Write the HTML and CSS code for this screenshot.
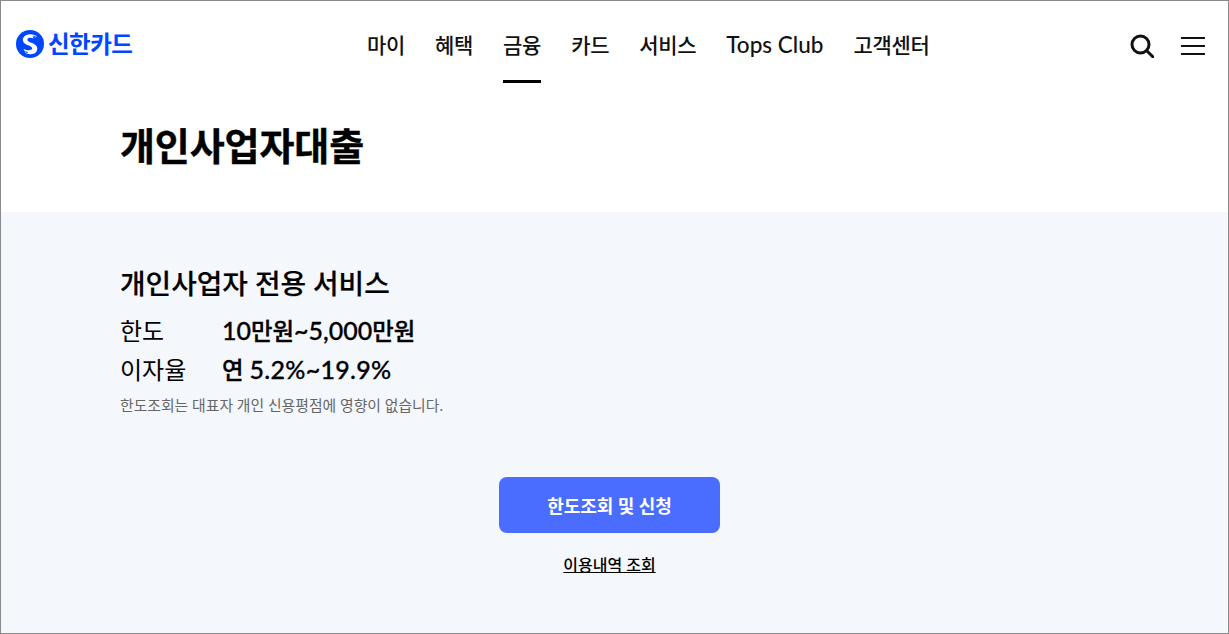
FILE: index.html
```html
<!DOCTYPE html>
<html lang="ko">
<head>
<meta charset="utf-8">
<title>개인사업자대출</title>
<link rel="stylesheet" href="styles.css">
</head>
<body>
<div class="frame">
  <header class="top">
    <a class="logo">
      <svg width="28" height="28" viewBox="0 0 28 28"><circle cx="14" cy="14" r="14" fill="#0046ff"/><path d="M21 6.500C17 3.500 10 3.500 7.500 7.500 5.500 11 8 13.500 11.500 15c2.500 1 5 1.800 4.500 3.800-.5 1.800-4 2-8.500.2l2.500 4.500c4 1.500 9.500 1.200 11-3 1.300-3.800-1.500-6-5-7.500-2.500-1-5-2-4.500-3.800.5-1.500 3.500-1.800 6-.7l-1-2.500 2.500 1.500z" fill="#fff"/><path d="M17 5.500l1.500 1.800 1.500-1zM9 21l2 2.500 1-1.500z" fill="#0046ff"/></svg>
      <span class="logo-text">신한카드</span>
    </a>
    <nav class="nav">
      <a>마이</a><a>혜택</a><a class="on">금융</a><a>카드</a><a>서비스</a><a class="latin">Tops Club</a><a>고객센터</a>
    </nav>
    <div class="tools">
      <svg width="24" height="24" viewBox="0 0 24 24" fill="none" stroke="#111" stroke-width="3"><circle cx="10.500" cy="10.500" r="8.500"/><path d="M16.800 16.800l6 6" stroke-linecap="round"/></svg>
      <svg width="24" height="20" viewBox="0 0 24 20" stroke="#111" stroke-width="2"><path d="M0 2h24M0 10h24M0 18h24"/></svg>
    </div>
  </header>
  <div class="title-wrap"><h1>개인사업자대출</h1></div>
  <main class="panel">
    <h2>개인사업자 전용 서비스</h2>
    <dl class="row"><dt>한도</dt><dd><span class="num">10</span>만원<span class="num">~5,000</span>만원</dd></dl>
    <dl class="row"><dt>이자율</dt><dd>연 <span class="num wide">5.2%~19.9%</span></dd></dl>
    <p class="note">한도조회는 대표자 개인 신용평점에 영향이 없습니다.</p>
    <div class="actions">
      <a class="btn">한도조회 및 신청</a>
      <a class="link">이용내역 조회</a>
    </div>
  </main>
</div>
</body>
</html>
```
FILE: styles.css
```css
* { box-sizing: border-box; }
html, body { margin: 0; height: 100%; }
body { font-family: Lato, "Noto Sans CJK KR", sans-serif; color: #000; overflow: hidden; }
.frame { width: 1229px; height: 634px; border: 1px solid #8a8a8a; display: flex; flex-direction: column; background: #fff; }
.top { height: 83px; display: flex; align-items: flex-start; padding: 0 23px 0 15px; position: relative; flex: none; }
.logo { display: flex; align-items: center; gap: 4px; margin-top: 28px; width: 300px; }
.logo-text { font-size: 23.500px; font-weight: 700; color: #0046ff; letter-spacing: -0.5px; line-height: 28px; padding-top: 1px; }
.nav { display: flex; gap: 30px; margin-left: 51px; }
.nav a { display: block; height: 82px; padding-top: 29px; font-size: 21px; line-height: 30px; font-weight: 500; color: #111; letter-spacing: -0.3px; }
.nav a.latin { font-size: 22.500px; letter-spacing: 0; }
.nav a.on { border-bottom: 3px solid #000; }
.tools { margin-left: auto; margin-top: 33px; display: flex; align-items: center; gap: 27px; }
.title-wrap { height: 128px; padding: 39px 119px 0; flex: none; }
h1 { margin: 0; font-size: 38px; line-height: 44px; font-weight: 700; letter-spacing: -0.1px; -webkit-text-stroke: 0.4px #000; }
.panel { flex: 1; background: #f4f7fc; padding: 56px 119px 0; }
h2 { margin: 0 0 12px; font-size: 27.800px; line-height: 32px; font-weight: 500; -webkit-text-stroke: 0.2px #000; }
.row { display: flex; margin: 0 0 6px; height: 33px; align-items: center; font-size: 24px; position: relative; top: 1px; }
.row dt { width: 102px; }
.row dd { margin: 0; font-size: 23.400px; font-weight: 500; -webkit-text-stroke: 0.3px #000; }
.num { font-size: 25px; }
.num.wide { letter-spacing: 0.3px; }
.note { margin: 11px 0 0; font-size: 14.850px; line-height: 20px; color: #666; }
.actions { display: flex; flex-direction: column; align-items: center; margin: 62px 0 0; padding-right: 10px; }
.btn { width: 221px; height: 56px; padding-bottom: 1px; border-radius: 8px; background: #4a6cff; color: #fff; font-size: 18px; font-weight: 700; display: flex; align-items: center; justify-content: center; }
.link { margin-top: 21px; font-size: 16px; line-height: 22px; text-decoration: underline; font-weight: 500; }
```
